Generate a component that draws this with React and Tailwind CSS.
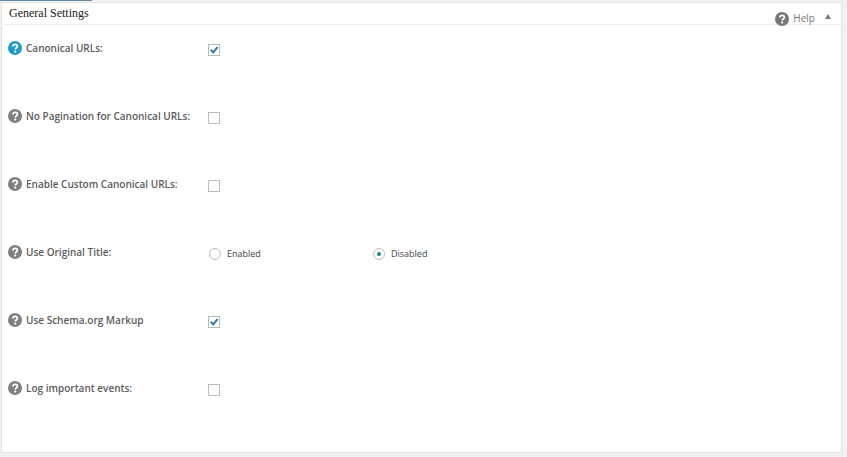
import React, { useState } from 'react';

const SETTINGS = [
  { id: 'canonical', label: 'Canonical URLs:', type: 'checkbox', active: true },
  { id: 'no-pagination', label: 'No Pagination for Canonical URLs:', type: 'checkbox' },
  { id: 'custom-canonical', label: 'Enable Custom Canonical URLs:', type: 'checkbox' },
  { id: 'original-title', label: 'Use Original Title:', type: 'radio', options: ['Enabled', 'Disabled'] },
  { id: 'schema', label: 'Use Schema.org Markup', type: 'checkbox' },
  { id: 'log-events', label: 'Log important events:', type: 'checkbox' },
];

const HelpIcon = () => (
  <svg viewBox="0 0 14 14" className="block size-[14px]" aria-hidden="true">
    <circle cx="7" cy="7" r="7" fill="currentColor" />
    <path d="M4.8 5.5c0-1.4 1-2.2 2.3-2.2s2.3.8 2.3 2c0 1.7-2.2 1.7-2.2 3.2" fill="none" stroke="#fff" strokeWidth="1.7" />
    <circle cx="7.2" cy="10.6" r="1.1" fill="#fff" />
  </svg>
);

const Checkbox = ({ id, checked, onChange }) => (
  <span className="grid size-3">
    <input
      id={id}
      type="checkbox"
      checked={checked}
      onChange={onChange}
      className="col-start-1 row-start-1 size-3 appearance-none border border-[#b9bcbe] bg-white"
    />
    {checked && (
      <svg viewBox="0 0 12 12" className="pointer-events-none col-start-1 row-start-1 size-3" aria-hidden="true">
        <path d="M2.8 5.8 5.2 8.4 9.6 3" fill="none" stroke="#3a7fae" strokeWidth="2" />
      </svg>
    )}
  </span>
);

const App = () => {
  const [open, setOpen] = useState(true);
  const [title, setTitle] = useState('Disabled');
  const [checks, setChecks] = useState({ canonical: true, schema: true });

  const toggle = (id) => setChecks({ ...checks, [id]: !checks[id] });

  return (
    <div className="min-h-screen bg-[#f1f1f1] pr-1 font-['Open_Sans',sans-serif] text-[#5c5c5c]">
      {/* Active tab underline */}
      <div className="h-px w-[92px] bg-[#5f8aa8]" />

      <section className="mt-px mr-px ml-px border border-[#e5e5e5] bg-white">
        {/* Header */}
        <header className="flex h-[22px] items-center justify-between border-b border-[#eee] pr-2 pl-[7px]">
          <h2 className="pb-px font-['Liberation_Serif',serif] text-[12px] leading-4 text-[#222]">General Settings</h2>
          <div className="flex items-start gap-2 pt-2">
            <button type="button" className="flex items-start gap-1 text-[#777]">
              <span className="pt-[2px]">
                <HelpIcon />
              </span>
              <span className="text-[10px] leading-4">Help</span>
            </button>
            <button type="button" aria-label="Toggle panel" onClick={() => setOpen(!open)} className="px-px py-1 text-[#777]">
              <svg viewBox="0 0 8 6" className="h-[6px] w-2" aria-hidden="true">
                <path d="M4 0 7 5H1z" fill="currentColor" />
              </svg>
            </button>
          </div>
        </header>

        {/* Settings */}
        {open && (
          <div className="pt-[15px] pb-1">
            {SETTINGS.map((s) => (
              <div key={s.id} className="flex h-[68px] items-start pl-[6px]">
                <div className="flex w-[200px] shrink-0 items-center gap-1">
                  <button type="button" aria-label={`Help: ${s.label}`} className={s.active ? 'text-[#1a9cc4]' : 'text-[#808080]'}>
                    <HelpIcon />
                  </button>
                  {s.type === 'checkbox' ? (
                    <label htmlFor={s.id} className="text-[10px] leading-4 font-semibold">{s.label}</label>
                  ) : (
                    <span id={s.id} className="text-[10px] leading-4 font-semibold">{s.label}</span>
                  )}
                </div>

                {s.type === 'checkbox' ? (
                  <div className="pt-1">
                    <Checkbox id={s.id} checked={!!checks[s.id]} onChange={() => toggle(s.id)} />
                  </div>
                ) : (
                  <div role="radiogroup" aria-labelledby={s.id} className="flex pt-1 pl-px">
                    {s.options.map((o) => (
                      <label key={o} className="flex w-[164px] items-center gap-[6px] text-[9px] leading-3 text-[#444]">
                        <input
                          type="radio"
                          name={s.id}
                          checked={title === o}
                          onChange={() => setTitle(o)}
                          className="grid size-3 appearance-none place-items-center rounded-full border border-[#b9bcbe] bg-white before:size-1 before:rounded-full checked:before:bg-[#1e7f96]"
                        />
                        {o}
                      </label>
                    ))}
                  </div>
                )}
              </div>
            ))}
          </div>
        )}
      </section>
    </div>
  );
};

export default App;
